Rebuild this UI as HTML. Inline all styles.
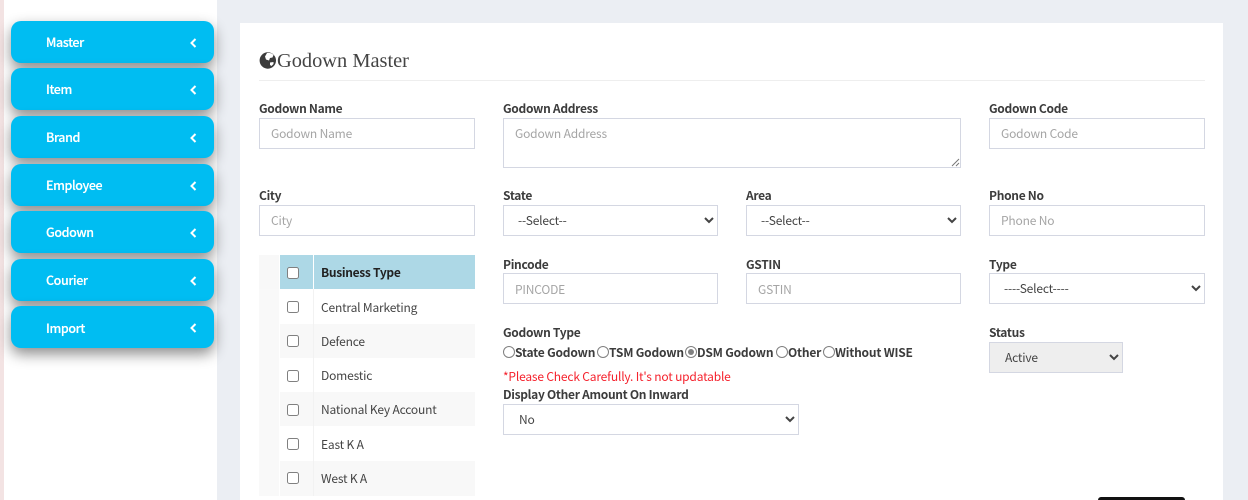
<!DOCTYPE html>
<html><head><meta charset="utf-8"><style>
html,body{margin:0;padding:0}
body{width:1248px;height:500px;overflow:hidden;position:relative;background:#ebeef3;font-family:"Noto Sans CJK JP","Liberation Sans",sans-serif;font-size:12px;letter-spacing:-.18px;color:#444;filter:blur(.3px)}
*{box-sizing:border-box}
.abs,label,.in,select,.nav,.t{position:absolute}
#side{position:absolute;left:4px;top:0;width:213px;height:500px;background:#fff}
#strip{position:absolute;left:0;top:0;width:4px;height:500px;background:#f3e3e3}
#card{position:absolute;left:240px;top:23px;width:983px;height:477px;background:#fff}
.nav{left:11px;width:203px;height:42px;border-radius:10px;background:#00bdf2;color:#fff;font-weight:500;font-size:12.5px;letter-spacing:-.4px;line-height:41px;padding-left:35px;box-shadow:0 6px 14px rgba(0,0,0,.45);text-shadow:0 0 .4px #fff}
.nav svg{position:absolute;left:179px;top:17px}
h1{position:absolute;left:277px;top:47px;margin:0;font:400 20.4px/28px "Liberation Serif",serif;letter-spacing:0;color:#444}
#hr{position:absolute;left:259px;top:80px;width:946px;height:1px;background:#eee}
label,.t{font-size:12px;line-height:16px;white-space:nowrap}
label{font-weight:700;color:#3c3c3c;letter-spacing:-.3px}
.in{border:1px solid #d4d7e2;height:31px;padding:0 11px;font:12px/30px "Noto Sans CJK JP",sans-serif;letter-spacing:-.18px;color:#a5a5a5;background:#fff}
select{border:1px solid #d4d7e2;height:31px;padding:0 10px;font:12px "Noto Sans CJK JP",sans-serif;letter-spacing:-.18px;color:#444;background:#fff;border-radius:0;outline:0}
.rowbg{position:absolute;left:259px;width:216px;height:34px}
.sep{position:absolute;left:279px;width:1px;background:#fff}
.cb{position:absolute;left:287px;width:12px;height:12px;border:1px solid #808080;border-radius:2.5px;background:#fff}
.rad{position:absolute;top:346px;width:12px;height:12px;border:1px solid #808080;border-radius:50%;background:#fff}
.rt{position:absolute;top:345px;font-weight:700;font-size:12px;line-height:16px;color:#3c3c3c;white-space:nowrap;letter-spacing:-.2px}
</style></head><body>
<div id="strip"></div><div id="side"></div><div id="card"></div>

<div class="nav" style="top:21px">Master<svg width="7" height="10" viewBox="0 0 7 10"><path d="M5.5 1 L1.5 5 L5.5 9" fill="none" stroke="#fff" stroke-width="2"/></svg></div>
<div class="nav" style="top:68px">Item<svg width="7" height="10" viewBox="0 0 7 10"><path d="M5.5 1 L1.5 5 L5.5 9" fill="none" stroke="#fff" stroke-width="2"/></svg></div>
<div class="nav" style="top:116px">Brand<svg width="7" height="10" viewBox="0 0 7 10"><path d="M5.5 1 L1.5 5 L5.5 9" fill="none" stroke="#fff" stroke-width="2"/></svg></div>
<div class="nav" style="top:164px">Employee<svg width="7" height="10" viewBox="0 0 7 10"><path d="M5.5 1 L1.5 5 L5.5 9" fill="none" stroke="#fff" stroke-width="2"/></svg></div>
<div class="nav" style="top:211px;line-height:42px">Godown<svg width="7" height="10" viewBox="0 0 7 10"><path d="M5.5 1 L1.5 5 L5.5 9" fill="none" stroke="#fff" stroke-width="2"/></svg></div>
<div class="nav" style="top:259px">Courier<svg width="7" height="10" viewBox="0 0 7 10"><path d="M5.5 1 L1.5 5 L5.5 9" fill="none" stroke="#fff" stroke-width="2"/></svg></div>
<div class="nav" style="top:306px;line-height:43px">Import<svg width="7" height="10" viewBox="0 0 7 10"><path d="M5.5 1 L1.5 5 L5.5 9" fill="none" stroke="#fff" stroke-width="2"/></svg></div>

<svg class="abs" style="left:259px;top:52px" width="18" height="17" viewBox="0 0 18 17"><circle cx="8.8" cy="8.5" r="8.2" fill="#3b3b3b"/><path d="M8 1 C10.5 .6 13 1.2 14.5 3 L13.5 5.5 L11 6 L10 8.5 L7 7.5 L6 4.5 Z" fill="#fff"/><path d="M11 10.5 L14.5 10 L14.5 12 L12.5 14 L11 13 Z" fill="#fff"/></svg>
<h1>Godown Master</h1>
<div id="hr"></div>

<label style="left:259px;top:101px">Godown Name</label>
<div class="in" style="left:259px;top:118px;width:216px">Godown Name</div>
<label style="left:503px;top:101px">Godown Address</label>
<div class="in" style="left:503px;top:118px;width:458px;height:50px">Godown Address
<svg class="abs" style="right:0;bottom:0" width="10" height="10" viewBox="0 0 10 10"><path d="M9 2 L2 9 M9 6 L6 9" stroke="#777" stroke-width="1" fill="none"/></svg></div>
<label style="left:989px;top:101px">Godown Code</label>
<div class="in" style="left:989px;top:118px;width:216px">Godown Code</div>

<label style="left:259px;top:188px">City</label>
<div class="in" style="left:259px;top:205px;width:216px">City</div>
<label style="left:503px;top:188px">State</label>
<select style="left:503px;top:205px;width:215px"><option>--Select--</option></select>
<label style="left:746px;top:188px">Area</label>
<select style="left:746px;top:205px;width:215px"><option>--Select--</option></select>
<label style="left:989px;top:188px">Phone No</label>
<div class="in" style="left:989px;top:205px;width:216px">Phone No</div>

<label style="left:503px;top:257px">Pincode</label>
<div class="in" style="left:503px;top:273px;width:215px;line-height:31px">PINCODE</div>
<label style="left:746px;top:257px">GSTIN</label>
<div class="in" style="left:746px;top:273px;width:215px;line-height:31px">GSTIN</div>
<label style="left:989px;top:257px">Type</label>
<select style="left:989px;top:273px;width:216px"><option>----Select----</option></select>

<label style="left:503px;top:325px">Godown Type</label>
<div class="rad" style="left:503px"></div><div class="rt" style="left:515px">State Godown</div>
<div class="rad" style="left:597px"></div><div class="rt" style="left:609px">TSM Godown</div>
<div class="rad" style="left:685px"><div style="position:absolute;left:2px;top:2px;width:6px;height:6px;border-radius:50%;background:#808080"></div></div><div class="rt" style="left:697px">DSM Godown</div>
<div class="rad" style="left:776px"></div><div class="rt" style="left:788px">Other</div>
<div class="rad" style="left:823px"></div><div class="rt" style="left:835px">Without WISE</div>
<div class="t" style="left:503px;top:369px;color:#f5222d">*Please Check Carefully. It's not updatable</div>
<label style="left:503px;top:387px">Display Other Amount On Inward</label>
<select style="left:503px;top:404px;width:296px;padding-left:11px"><option>No</option></select>

<label style="left:989px;top:325px">Status</label>
<select style="left:989px;top:342px;width:134px;background:#eeeeee;padding-left:11px"><option>Active</option></select>

<div class="rowbg" style="top:255px;background:#add8e6"></div>
<div class="abs" style="left:259px;top:255px;width:20px;height:34px;background:#f8f8f8"></div>
<div class="rowbg" style="top:324px;background:#f8f8f8"></div>
<div class="rowbg" style="top:392px;background:#f8f8f8"></div>
<div class="rowbg" style="top:461px;background:#f8f8f8;height:35px"></div>
<div class="abs" style="left:259px;top:289px;width:20px;height:207px;background:#f9f9f9"></div>
<div class="sep" style="top:255px;height:241px"></div>
<div class="abs" style="left:313px;top:255px;width:1px;height:241px;background:#f2f2f2"></div>
<div class="abs" style="left:313px;top:255px;width:1px;height:34px;background:#fff"></div>

<div class="cb" style="top:267px"></div>
<div class="cb" style="top:301px"></div>
<div class="cb" style="top:335px"></div>
<div class="cb" style="top:370px"></div>
<div class="cb" style="top:404px"></div>
<div class="cb" style="top:438px"></div>
<div class="cb" style="top:472px"></div>
<div class="t" style="left:321px;top:265px;font-weight:700;color:#222;letter-spacing:-.3px">Business Type</div>
<div class="t" style="left:321px;top:300px">Central Marketing</div>
<div class="t" style="left:321px;top:334px">Defence</div>
<div class="t" style="left:321px;top:368px">Domestic</div>
<div class="t" style="left:321px;top:402px">National Key Account</div>
<div class="t" style="left:321px;top:437px">East K A</div>
<div class="t" style="left:321px;top:471px">West K A</div>

<div class="abs" style="left:1098px;top:497px;width:87px;height:3px;background:#111;border-radius:3px 3px 0 0"></div>
</body></html>
